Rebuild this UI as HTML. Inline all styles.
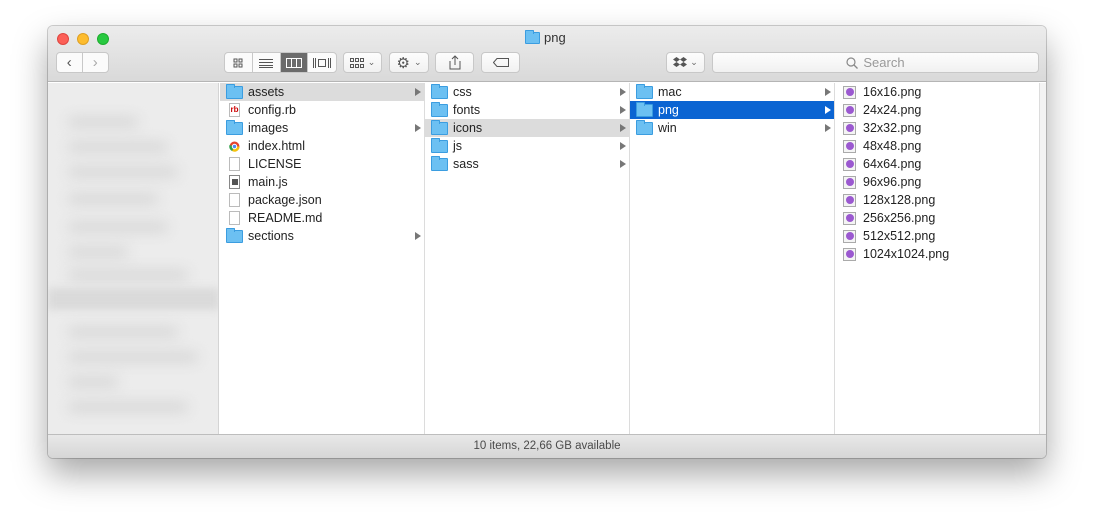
<!DOCTYPE html>
<html><head><meta charset="utf-8"><style>
*{margin:0;padding:0;box-sizing:border-box}
body{width:1094px;height:532px;background:#fff;position:relative;overflow:hidden;font-family:"Liberation Sans",sans-serif;font-size:12.5px;color:#222}
.win{position:absolute;left:48px;top:26px;width:998px;height:432px;border-radius:5px;background:#fff;box-shadow:0 16px 34px rgba(0,0,0,.35),0 0 0 1px rgba(0,0,0,.18);overflow:hidden}
.tb{position:absolute;left:0;top:0;width:998px;height:56px;background:linear-gradient(#ececec,#d9d9d9);border-bottom:1px solid #b5b5b5}
.light{position:absolute;top:7px;width:12px;height:12px;border-radius:50%}
.title{position:absolute;top:4px;left:477px;font-size:13px;color:#333;display:flex;align-items:center;gap:4px}
.btn{position:absolute;top:26px;height:21px;background:linear-gradient(#fdfdfd,#f1f1f1);border:1px solid #c8c8c8;border-radius:4px;display:flex;align-items:center;justify-content:center;color:#666}
.seg{position:absolute;top:26px;height:21px;display:flex;border:1px solid #c8c8c8;border-radius:4px;overflow:hidden;background:#fbfbfb}
.seg div{width:28px;border-right:1px solid #c8c8c8;display:flex;align-items:center;justify-content:center}
.seg div:last-child{border-right:none}
.side{position:absolute;left:0;top:57px;width:171px;height:351px;background:#ececec;border-right:1px solid #d4d4d4;overflow:hidden}
.blur{position:absolute;filter:blur(7px);background:#d0d0d0;height:8px;border-radius:4px}
.col{position:absolute;top:57px;height:351px;border-right:1px solid #dcdcdc;background:#fff}
.row{height:18px;display:flex;align-items:center;padding-left:6px;position:relative;white-space:nowrap}
.row .ic{width:17px;height:14px;margin-right:5px;flex:none;display:flex;align-items:center;justify-content:center}
.row.sel{background:#dcdcdc}
.row.act{background:#0b64d2;color:#fff}
.arr{position:absolute;right:3px;top:5px;width:0;height:0;border-left:6px solid #777;border-top:4px solid transparent;border-bottom:4px solid transparent}
.act .arr{border-left-color:#fff}
.fold{width:17px;height:13px;background:#6cc0f2;border:1px solid #3b9de0;border-radius:1px;position:relative}
.fold:before{content:"";position:absolute;left:-1px;top:-3px;width:7px;height:3px;background:#6cc0f2;border:1px solid #3b9de0;border-bottom:none;border-radius:1px 1px 0 0}
.doc{width:11px;height:14px;border:1px solid #bbb;background:#fff}
.png{width:13px;height:13px;border:1px solid #aaa;background:#f4f4f4;display:flex;align-items:center;justify-content:center}
.png i{width:8px;height:8px;border-radius:50%;background:#9b59d0}
.status{position:absolute;left:0;top:408px;width:998px;height:24px;background:linear-gradient(#e8e8e8,#d6d6d6);border-top:1px solid #bdbdbd;text-align:center;font-size:11.5px;color:#4a4a4a;line-height:23px}
</style></head><body>
<div class="win">
<div class="tb">
 <div class="light" style="left:9px;background:#fc5f57;border:1px solid #de4640"></div>
 <div class="light" style="left:29px;background:#fdbc2e;border:1px solid #dea024"></div>
 <div class="light" style="left:49px;background:#28c940;border:1px solid #1ead2e"></div>
 <div class="title"><span class="fold" style="width:15px;height:12px;display:inline-block"></span>png</div>
 <div class="seg" style="left:8px;width:53px"><div style="width:26px;font-size:15px;color:#555">&#8249;</div><div style="width:26px;font-size:15px;color:#aaa">&#8250;</div></div>
 <div class="seg" style="left:176px;width:113px">
  <div><svg width="10" height="10"><g fill="none" stroke="#555"><rect x="1" y="1" width="3" height="3"/><rect x="6" y="1" width="3" height="3"/><rect x="1" y="6" width="3" height="3"/><rect x="6" y="6" width="3" height="3"/></g></svg></div>
  <div><svg width="14" height="10"><path d="M0 1.5H14M0 4.5H14M0 7.5H14M0 9.5H14" stroke="#555"/></svg></div>
  <div style="background:#6b6b6b"><svg width="16" height="10"><rect x=".5" y=".5" width="15" height="9" fill="none" stroke="#fff"/><path d="M5.5 0V10M10.5 0V10" stroke="#fff"/></svg></div>
  <div><svg width="18" height="10"><path d="M.5 0V10M2.5 0V10M15.5 0V10M17.5 0V10" stroke="#555"/><rect x="5.5" y="1.5" width="7" height="7" fill="none" stroke="#555"/></svg></div>
 </div>
 <div class="btn" style="left:295px;width:39px;gap:4px"><svg width="14" height="10"><g fill="none" stroke="#555"><rect x=".5" y=".5" width="3" height="3"/><rect x="5.5" y=".5" width="3" height="3"/><rect x="10.5" y=".5" width="3" height="3"/><rect x=".5" y="6.5" width="3" height="3"/><rect x="5.5" y="6.5" width="3" height="3"/><rect x="10.5" y="6.5" width="3" height="3"/></g></svg><span style="font-size:9px">&#8964;</span></div>
 <div class="btn" style="left:341px;width:40px;gap:4px"><span style="font-size:15px;color:#555">&#9881;</span><span style="font-size:9px">&#8964;</span></div>
 <div class="btn" style="left:387px;width:39px"><svg width="12" height="15"><path d="M1 6V14H11V6M6 1V10M3 4L6 1L9 4" fill="none" stroke="#555"/></svg></div>
 <div class="btn" style="left:433px;width:39px"><svg width="16" height="9"><path d="M4 .5H15.5V8.5H4L.5 4.5Z" fill="none" stroke="#555"/></svg></div>
 <div class="btn" style="left:618px;width:39px;gap:3px"><svg width="14" height="12"><path d="M3.5 0L7 2.5L3.5 5L0 2.5ZM10.5 0L14 2.5L10.5 5L7 2.5ZM3.5 5L7 7.5L3.5 10L0 7.5ZM10.5 5L14 7.5L10.5 10L7 7.5Z" fill="#555"/></svg><span style="font-size:9px">&#8964;</span></div>
 <div class="btn" style="left:664px;width:327px;color:#999;font-size:13px;gap:5px"><svg width="12" height="12"><circle cx="5" cy="5" r="4" fill="none" stroke="#888" stroke-width="1.2"/><path d="M8 8L11.5 11.5" stroke="#888" stroke-width="1.3"/></svg>Search</div>
</div>
<div class="side">
 <div class="blur" style="left:20px;top:35px;width:70px"></div>
 <div class="blur" style="left:20px;top:60px;width:100px"></div>
 <div class="blur" style="left:20px;top:85px;width:110px"></div>
 <div class="blur" style="left:20px;top:112px;width:90px"></div>
 <div class="blur" style="left:20px;top:140px;width:100px"></div>
 <div class="blur" style="left:20px;top:165px;width:60px"></div>
 <div class="blur" style="left:20px;top:188px;width:120px"></div>
 <div style="position:absolute;left:0;top:205px;width:171px;height:22px;background:#dadada;filter:blur(4px)"></div>
 <div class="blur" style="left:20px;top:245px;width:110px"></div>
 <div class="blur" style="left:20px;top:270px;width:130px"></div>
 <div class="blur" style="left:20px;top:295px;width:50px"></div>
 <div class="blur" style="left:20px;top:320px;width:120px"></div>
</div>
<div class="col" style="left:172px;width:205px">
 <div class="row sel"><span class="ic"><span class="fold"></span></span>assets<span class="arr"></span></div>
 <div class="row"><span class="ic"><span class="doc" style="color:#c00;font-size:8px;font-weight:bold;line-height:12px;text-align:center">rb</span></span>config.rb</div>
 <div class="row"><span class="ic"><span class="fold"></span></span>images<span class="arr"></span></div>
 <div class="row"><span class="ic"><svg width="11" height="11"><circle cx="5.5" cy="5.5" r="5" fill="#e4442e"/><path d="M5.5 5.5L10.5 5.5A5 5 0 0 1 3 10Z" fill="#f4c20d"/><path d="M5.5 5.5L3 10A5 5 0 0 1 .5 4Z" fill="#2ea24a"/><circle cx="5.5" cy="5.5" r="2.2" fill="#4a8af4" stroke="#fff"/></svg></span>index.html</div>
 <div class="row"><span class="ic"><span class="doc"></span></span>LICENSE</div>
 <div class="row"><span class="ic"><span class="doc" style="border-color:#888;display:flex;align-items:center;justify-content:center"><i style="width:6px;height:6px;background:#555;display:block"></i></span></span>main.js</div>
 <div class="row"><span class="ic"><span class="doc"></span></span>package.json</div>
 <div class="row"><span class="ic"><span class="doc"></span></span>README.md</div>
 <div class="row"><span class="ic"><span class="fold"></span></span>sections<span class="arr"></span></div>
</div>
<div class="col" style="left:377px;width:205px">
 <div class="row"><span class="ic"><span class="fold"></span></span>css<span class="arr"></span></div>
 <div class="row"><span class="ic"><span class="fold"></span></span>fonts<span class="arr"></span></div>
 <div class="row sel"><span class="ic"><span class="fold"></span></span>icons<span class="arr"></span></div>
 <div class="row"><span class="ic"><span class="fold"></span></span>js<span class="arr"></span></div>
 <div class="row"><span class="ic"><span class="fold"></span></span>sass<span class="arr"></span></div>
</div>
<div class="col" style="left:582px;width:205px">
 <div class="row"><span class="ic"><span class="fold"></span></span>mac<span class="arr"></span></div>
 <div class="row act"><span class="ic"><span class="fold"></span></span>png<span class="arr"></span></div>
 <div class="row"><span class="ic"><span class="fold"></span></span>win<span class="arr"></span></div>
</div>
<div class="col" style="left:787px;width:205px">
 <div class="row"><span class="ic"><span class="png"><i></i></span></span>16x16.png</div>
 <div class="row"><span class="ic"><span class="png"><i></i></span></span>24x24.png</div>
 <div class="row"><span class="ic"><span class="png"><i></i></span></span>32x32.png</div>
 <div class="row"><span class="ic"><span class="png"><i></i></span></span>48x48.png</div>
 <div class="row"><span class="ic"><span class="png"><i></i></span></span>64x64.png</div>
 <div class="row"><span class="ic"><span class="png"><i></i></span></span>96x96.png</div>
 <div class="row"><span class="ic"><span class="png"><i></i></span></span>128x128.png</div>
 <div class="row"><span class="ic"><span class="png"><i></i></span></span>256x256.png</div>
 <div class="row"><span class="ic"><span class="png"><i></i></span></span>512x512.png</div>
 <div class="row"><span class="ic"><span class="png"><i></i></span></span>1024x1024.png</div>
</div>
<div style="position:absolute;left:992px;top:57px;width:6px;height:351px;background:#f3f3f3"></div>
<div class="status">10 items, 22,66 GB available</div>
</div>
</body></html>
